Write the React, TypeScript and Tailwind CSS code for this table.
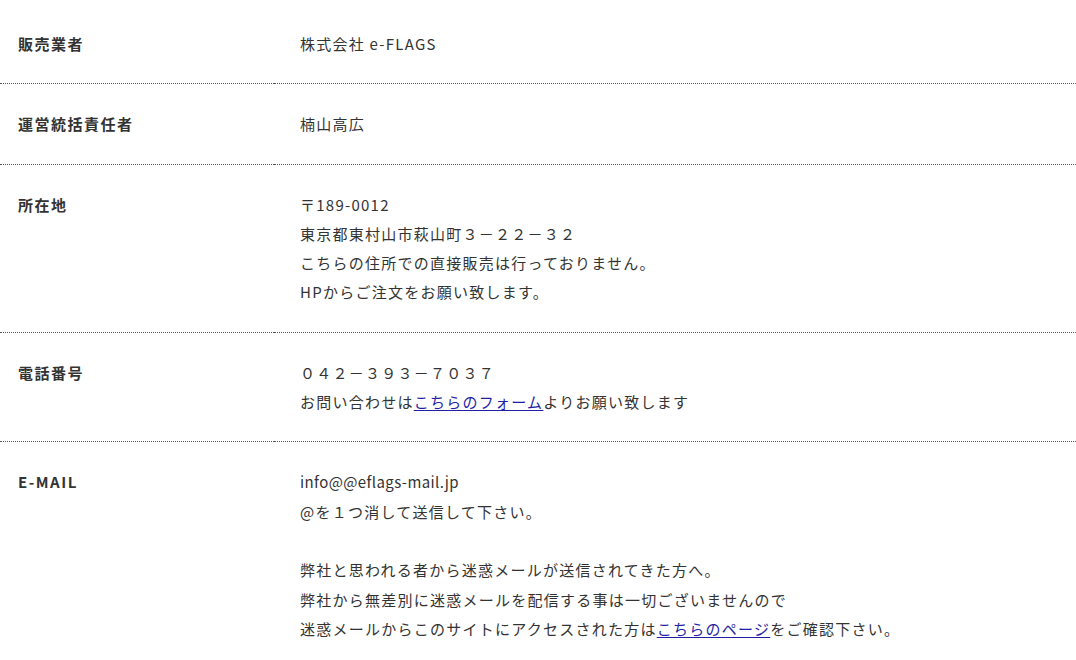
import React from "react";

const Link = ({ children }: { children: React.ReactNode }) => (
  <a href="#" className="text-[#1f1fa8] underline underline-offset-2">
    {children}
  </a>
);

const rows: { label: string; lines: React.ReactNode[] }[] = [
  { label: "販売業者", lines: ["株式会社 e-FLAGS"] },
  { label: "運営統括責任者", lines: ["楠山高広"] },
  {
    label: "所在地",
    lines: [
      "〒189-0012",
      "東京都東村山市萩山町３－２２－３２",
      "こちらの住所での直接販売は行っておりません。",
      "HPからご注文をお願い致します。",
    ],
  },
  {
    label: "電話番号",
    lines: [
      "０４２－３９３－７０３７",
      <>
        お問い合わせは<Link>こちらのフォーム</Link>よりお願い致します
      </>,
    ],
  },
  {
    label: "E-MAIL",
    lines: [
      <span className="tracking-[0.4px]">info@@eflags-mail.jp</span>,
      "@を１つ消して送信して下さい。",
      "\u00a0",
      "弊社と思われる者から迷惑メールが送信されてきた方へ。",
      "弊社から無差別に迷惑メールを配信する事は一切ございませんので",
      <>
        迷惑メールからこのサイトにアクセスされた方は<Link>こちらのページ</Link>をご確認下さい。
      </>,
    ],
  },
];

export default function App() {
  return (
    <div
      className="bg-white text-[15px] leading-[29.3px] text-[#333] tracking-[1.25px]"
      style={{ fontFamily: '"Noto Sans CJK JP", "Noto Sans", sans-serif' }}
    >
      {rows.map((row, i) => {
        const cell = `pb-[25px] ${i === 0 ? "pt-[29px]" : "pt-[25px]"} ${
          i < rows.length - 1 ? "border-b border-dotted border-[#555]" : ""
        }`;
        return (
          <div key={row.label} className="flex">
            <div className={`w-[274px] shrink-0 pl-[18px] font-bold tracking-[1.5px] ${cell}`}>
              {row.label}
            </div>
            <div className={`flex-1 pl-[26px] ${cell}`}>
              {row.lines.map((line, j) => (
                <div key={j}>{line}</div>
              ))}
            </div>
          </div>
        );
      })}
    </div>
  );
}
